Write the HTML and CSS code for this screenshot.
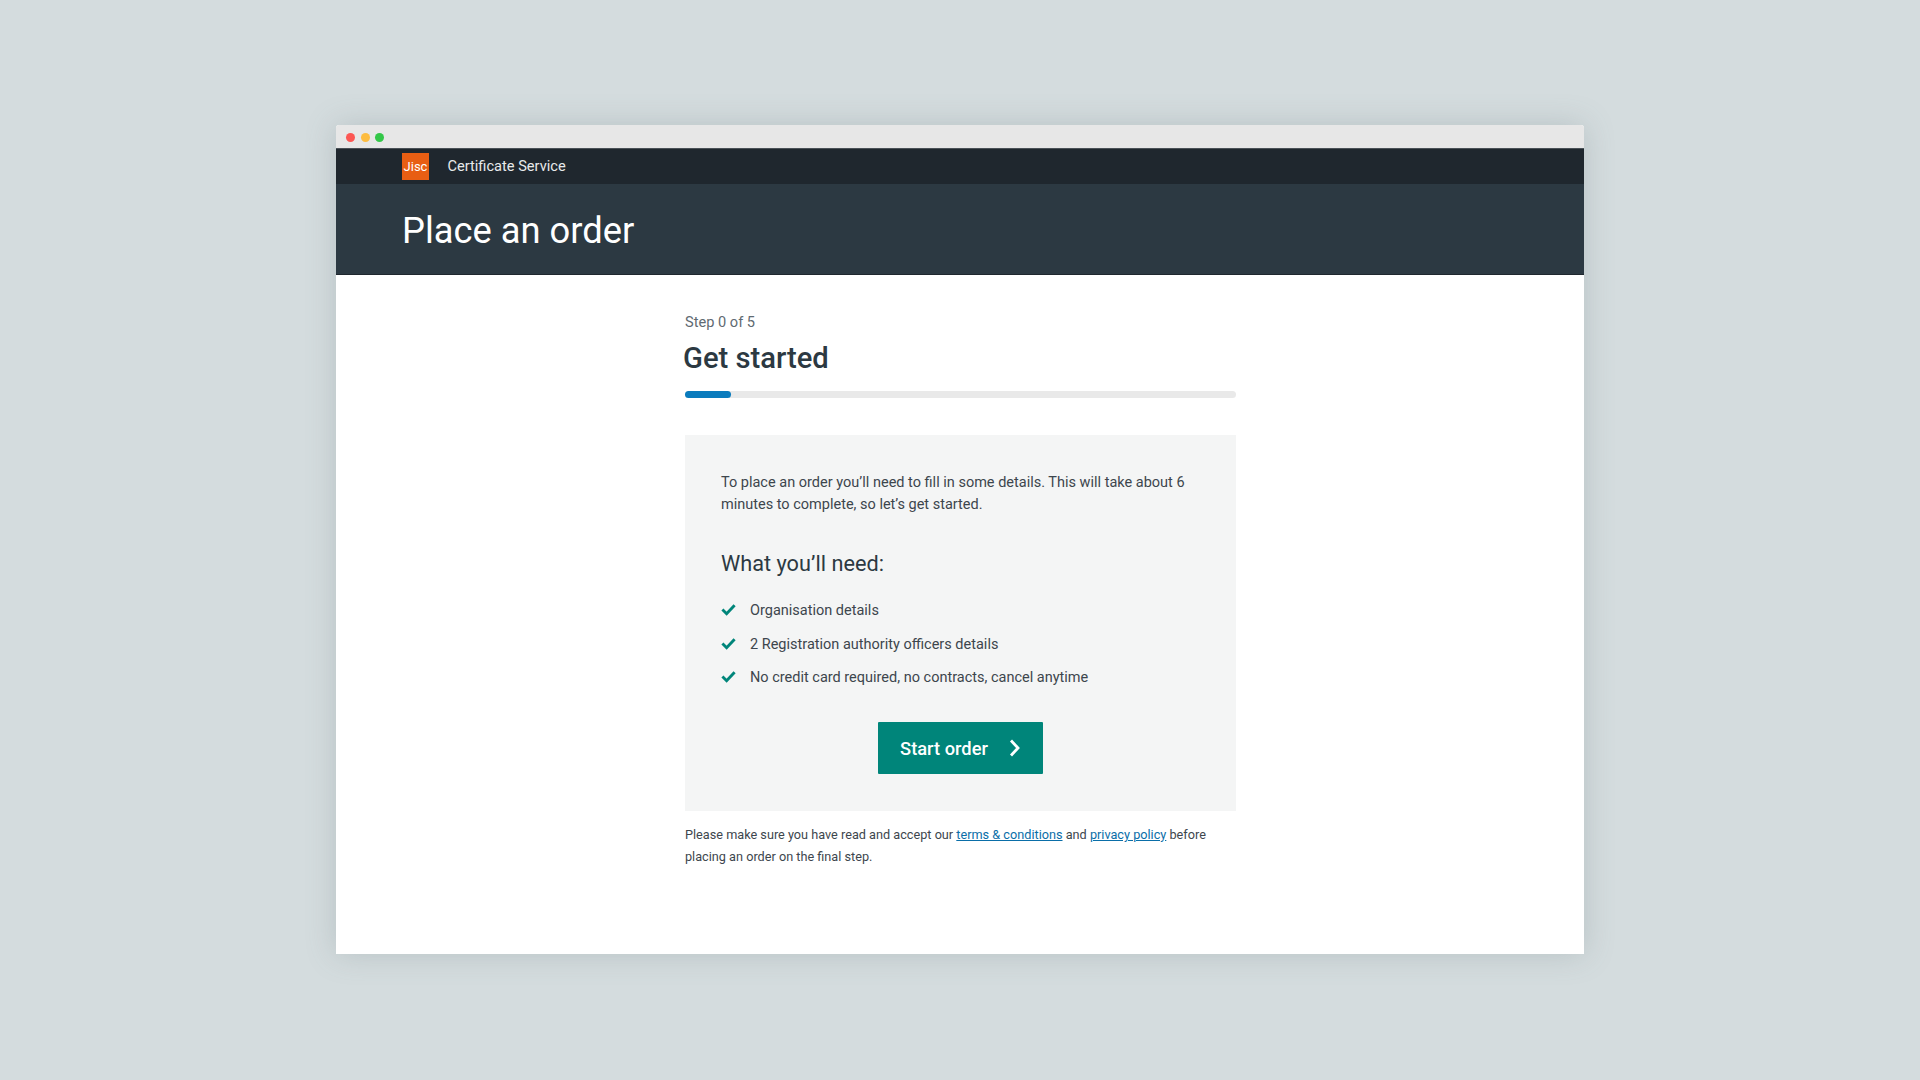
FILE: index.html
```html
<!DOCTYPE html>
<html lang="en">
<head>
    <meta charset="UTF-8">
    <meta name="viewport" content="width=device-width, initial-scale=1.0">
    <title>Place an order</title>
    <link rel="stylesheet" href="styles.css">
</head>
<body>
    <div class="window">
        <div class="titlebar">
            <span class="dot dot-red"></span>
            <span class="dot dot-yellow"></span>
            <span class="dot dot-green"></span>
        </div>
        <nav class="topnav">
            <div class="logo">Jisc</div>
            <div class="service-name">Certificate Service</div>
        </nav>
        <header class="page-header">
            <h1>Place an order</h1>
        </header>
        <main class="content">
            <div class="step">Step 0 of 5</div>
            <h2>Get started</h2>
            <div class="progress"><div class="progress-fill"></div></div>
            <section class="card">
                <p class="intro">To place an order you’ll need to fill in some details. This will take about 6 minutes to complete, so let’s get started.</p>
                <h3>What you’ll need:</h3>
                <ul class="needs">
                    <li>
                        <svg class="check" viewBox="0 0 16 13" width="15" height="13"><path d="M1.5 6.5 L6 11 L14.5 2" fill="none" stroke="#00857a" stroke-width="3.1"/></svg>
                        Organisation details
                    </li>
                    <li>
                        <svg class="check" viewBox="0 0 16 13" width="15" height="13"><path d="M1.5 6.5 L6 11 L14.5 2" fill="none" stroke="#00857a" stroke-width="3.1"/></svg>
                        2 Registration authority officers details
                    </li>
                    <li>
                        <svg class="check" viewBox="0 0 16 13" width="15" height="13"><path d="M1.5 6.5 L6 11 L14.5 2" fill="none" stroke="#00857a" stroke-width="3.1"/></svg>
                        No credit card required, no contracts, cancel anytime
                    </li>
                </ul>
                <div class="actions">
                    <button class="start">
                        Start order
                        <svg viewBox="0 0 12 18" width="12" height="18"><path d="M2 1.5 L9 9 L2 16.5" fill="none" stroke="#fff" stroke-width="2.8"/></svg>
                    </button>
                </div>
            </section>
            <p class="terms">Please make sure you have read and accept our <a href="#">terms &amp; conditions</a> and <a href="#">privacy policy</a> before placing an order on the final step.</p>
        </main>
    </div>
</body>
</html>
```

FILE: styles.css
```css
* {
    margin: 0;
    padding: 0;
    box-sizing: border-box;
    font-family: Roboto, 'Liberation Sans', sans-serif;
}

body {
    background-color: #d4dcde;
    min-height: 1080px;
    padding: 125px 336px 0;
    overflow: hidden;
}

.window {
    width: 1248px;
    height: 829px;
    background-color: #fff;
    border-radius: 3px 3px 0 0;
    box-shadow: 0 0 30px rgba(100, 115, 120, 0.25);
    overflow: hidden;
}

.titlebar {
    height: 23px;
    background-color: #e7e7e7;
    display: flex;
    align-items: center;
    gap: 5.5px;
    padding: 1px 0 0 10px;
}

.dot {
    width: 9px;
    height: 9px;
    border-radius: 50%;
}

.dot-red { background-color: #fc5753; }
.dot-yellow { background-color: #fdbc40; }
.dot-green { background-color: #33c748; }

.topnav {
    height: 36px;
    background-color: #1f272e;
    display: flex;
    align-items: center;
    padding-left: 66px;
    border-top: 1px solid #4a5157;
}

.logo {
    width: 27px;
    height: 27px;
    background-color: #e85e13;
    color: #fff;
    font-size: 13px;
    display: flex;
    align-items: center;
    justify-content: center;
}

.service-name {
    color: #e8eaeb;
    font-size: 14.6px;
    margin: -2px 0 0 18.5px;
}

.page-header {
    height: 91px;
    background-color: #2c3942;
    border-bottom: 1px solid #1f272e;
    padding: 12px 0 0 66px;
}

h1 {
    color: #fff;
    font-size: 36.3px;
    font-weight: 400;
    line-height: 70px;
}

.content {
    width: 551px;
    margin-left: 349px;
    padding-top: 38px;
}

.step {
    color: #5f6a72;
    font-size: 14.6px;
    line-height: 19px;
}

h2 {
    color: #2c3942;
    font-size: 29.2px;
    font-weight: 500;
    line-height: 37px;
    margin: 8px 0 0 -2px;
}

.progress {
    height: 7px;
    background-color: #e9e9e9;
    border-radius: 4px;
    margin-top: 14px;
}

.progress-fill {
    width: 46px;
    height: 7px;
    background-color: #0a7bbd;
    border-radius: 4px;
}

.card {
    background-color: #f4f5f5;
    height: 376px;
    margin-top: 37px;
    padding: 37px 36px 0;
}

.intro {
    color: #3d464d;
    font-size: 14.5px;
    line-height: 22px;
}

h3 {
    color: #2c3942;
    font-size: 21.7px;
    font-weight: 400;
    line-height: 28px;
    margin-top: 34px;
}

.needs {
    list-style: none;
    margin-top: 16px;
}

.needs li {
    display: flex;
    align-items: center;
    color: #3d464d;
    font-size: 14.5px;
    height: 33.4px;
}

.check {
    margin: -2px 14px 0 0;
}

.actions {
    display: flex;
    justify-content: center;
    margin-top: 28px;
}

.start {
    width: 165px;
    height: 52px;
    background-color: #00857a;
    color: #fff;
    border: none;
    border-radius: 1px;
    font-size: 18.3px;
    font-weight: 500;
    display: flex;
    align-items: center;
    justify-content: center;
    gap: 21px;
}

.terms {
    color: #3d464d;
    font-size: 12.7px;
    line-height: 22px;
    margin-top: 13px;
}

.terms a {
    color: #0a6ea8;
}
```
